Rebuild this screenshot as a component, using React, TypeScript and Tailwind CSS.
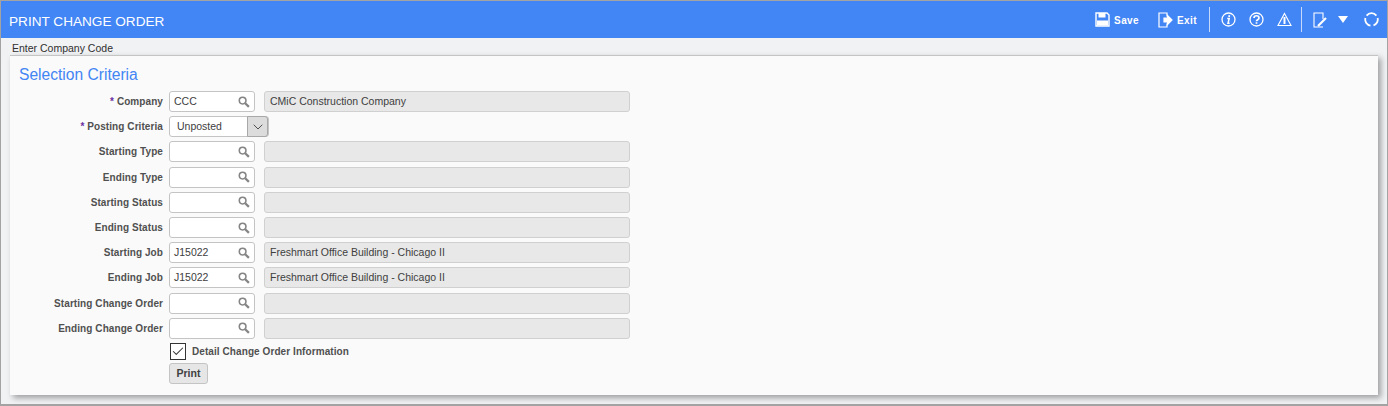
import { ChevronDown, Check } from 'lucide-react'

const fields = [
  { label: 'Company', required: true, value: 'CCC', desc: 'CMiC Construction Company' },
  { label: 'Posting Criteria', required: true, select: true },
  { label: 'Starting Type' },
  { label: 'Ending Type' },
  { label: 'Starting Status' },
  { label: 'Ending Status' },
  { label: 'Starting Job', value: 'J15022', desc: 'Freshmart Office Building - Chicago II' },
  { label: 'Ending Job', value: 'J15022', desc: 'Freshmart Office Building - Chicago II' },
  { label: 'Starting Change Order' },
  { label: 'Ending Change Order' },
]

function ToolbarText({ children }: { children: string }) {
  return <span className="text-[10px] font-bold tracking-[0.4px] text-white">{children}</span>
}

function Divider() {
  return <div className="h-[25px] w-px bg-[#c6d9fb]" />
}

function SearchIcon() {
  return (
    <svg width="12" height="12" viewBox="0 0 13 13" fill="none" stroke="#858585">
      <circle cx="5" cy="5" r="3.6" strokeWidth="1.7" />
      <path d="M7.8 7.8l4 4" strokeWidth="2.4" />
    </svg>
  )
}

function Row({ label, required, value, desc, select }: (typeof fields)[number]) {
  return (
    <div className="flex h-[25.2px] items-center">
      <label className="w-[159px] pr-[6px] text-right text-[10px] font-bold tracking-[0.08px] text-[#505050]">
        {required && <span className="text-[#6a2f9f]">* </span>}
        {label}
      </label>
      {select ? (
        <div className="flex h-[21px] w-[100px] items-center rounded-[3px] border border-[#c4c4c4] bg-white">
          <span className="flex-1 pl-[7px] text-[10.5px] text-[#404040]">Unposted</span>
          <span className="flex h-[21px] w-[21px] items-center justify-center rounded-r-[3px] border border-[#a8a8a8] bg-[#dcdcdc]">
            <ChevronDown size={16} strokeWidth={1.25} className="text-[#333]" />
          </span>
        </div>
      ) : (
        <>
          <div className="flex h-[21px] w-[86px] items-center justify-between rounded-[3px] border border-[#c4c4c4] bg-white pl-[4px] pr-[4px]">
            <span className="text-[10.5px] text-[#404040]">{value}</span>
            <SearchIcon />
          </div>
          <div className="ml-[9px] flex h-[21px] w-[366px] items-center rounded-[3px] border border-[#d0d0d0] bg-[#e8e8e8] pl-[5px] text-[10.5px] text-[#404040]">
            {desc}
          </div>
        </>
      )}
    </div>
  )
}

export default function App() {
  return (
    <div className="h-[406px] w-[1388px] overflow-hidden border border-b-2 border-[#a3a3a3] bg-[#f1f2f4] font-['Liberation_Sans',sans-serif]">
      <header className="flex h-[37px] items-center justify-between bg-[#4285f4] pl-[8px] pr-[8px] text-white">
        <h1 className="pt-[5px] text-[13.6px]">PRINT CHANGE ORDER</h1>
        <div className="flex items-center">
          <svg width="15" height="15" viewBox="0 0 15 15" fill="none" stroke="white" strokeWidth="1.4">
            <path d="M1 1h11l2 2v11H1z" />
            <path d="M3.5 1h7v4.5h-7z" fill="white" stroke="none" />
            <path d="M2 8.5h11v5H2z" fill="white" stroke="none" />
          </svg>
          <span className="ml-[4px] -mt-[1px]"><ToolbarText>Save</ToolbarText></span>
          <svg className="ml-[19px]" width="15" height="16" viewBox="0 0 15 16" fill="none" stroke="white" strokeWidth="1.2">
            <path d="M9 4.5V1H1v14h8v-3.5" />
            <path d="M6 6h3.5V3.5L14 8l-4.5 4.5V10H6z" fill="white" />
          </svg>
          <span className="ml-[4px] -mt-[1px]"><ToolbarText>Exit</ToolbarText></span>
          <div className="ml-[12px]"><Divider /></div>
          <svg className="ml-[11px]" width="15" height="15" viewBox="0 0 15 15" fill="none" stroke="white" strokeWidth="1.3">
            <circle cx="7.5" cy="7.5" r="6.5" />
            <path d="M6.2 6.5h2L7 11.3h1.6" strokeWidth="1.5" />
            <path d="M8.2 3.2v1.8" strokeWidth="1.8" />
          </svg>
          <svg className="ml-[13px]" width="15" height="15" viewBox="0 0 15 15" fill="none" stroke="white" strokeWidth="1.3">
            <circle cx="7.5" cy="7.5" r="6.5" />
            <path d="M5 6c0-3 5-3 5 0 0 1.7-2.5 1.6-2.5 3.2M7.5 10.2v1.6" strokeWidth="1.7" />
          </svg>
          <svg className="ml-[13px]" width="15" height="15" viewBox="0 0 15 15" fill="none" stroke="white" strokeWidth="1.1">
            <path d="M7.5 1.5L14 13.5H1z" />
            <path d="M7.5 5v7" strokeWidth="2" />
          </svg>
          <div className="ml-[9px]"><Divider /></div>
          <svg className="ml-[11px]" width="15" height="16" viewBox="0 0 15 16" fill="none" stroke="white" strokeWidth="1.1">
            <path d="M10 15H1V1h9v6" />
            <path d="M5 14l8-8" strokeWidth="2.2" />
          </svg>
          <svg className="ml-[10px]" width="10" height="7" viewBox="0 0 10 7" fill="white">
            <path d="M0 0h10L5 7z" />
          </svg>
          <svg className="ml-[16px]" width="15" height="15" viewBox="0 0 15 15" fill="none" stroke="white" strokeWidth="1.8">
            <path d="M2.6 3.6A6.2 6.2 0 0 1 12.4 3.6M13.6 6A6.2 6.2 0 0 1 9.5 13.4M1.4 6A6.2 6.2 0 0 0 6.5 13.6" />
          </svg>
        </div>
      </header>
      <p className="h-[17px] pl-[11px] pt-[4px] text-[10.5px] leading-[13px] text-[#303030]">Enter Company Code</p>
      <section className="ml-[9px] h-[340px] w-[1368px] border-t border-[#c4c4c4] bg-[#fafafa] pl-[9px] pt-[9px] shadow-[3px_3px_6px_rgba(0,0,0,0.35)]">
        <h2 className="h-[24px] text-[15.6px] leading-[20px] text-[#4285f4]">Selection Criteria</h2>
        <div className="-ml-[9px]">
          {fields.map((f) => (
            <Row key={f.label} {...f} />
          ))}
          <div className="ml-[160px] mt-[2px] flex items-center">
            <span className="flex h-[17px] w-[16px] items-center justify-center border-[1.5px] border-[#333] bg-white">
              <Check size={15} strokeWidth={1.75} className="text-[#333]" />
            </span>
            <span className="ml-[6px] text-[10px] font-bold tracking-[0.08px] text-[#505050]">Detail Change Order Information</span>
          </div>
          <button className="ml-[159px] mt-[3px] block h-[21px] w-[39px] rounded-[3px] border border-[#c4c4c4] bg-[#e6e6e6] text-[10.5px] font-bold text-[#404040]">
            Print
          </button>
        </div>
      </section>
    </div>
  )
}
